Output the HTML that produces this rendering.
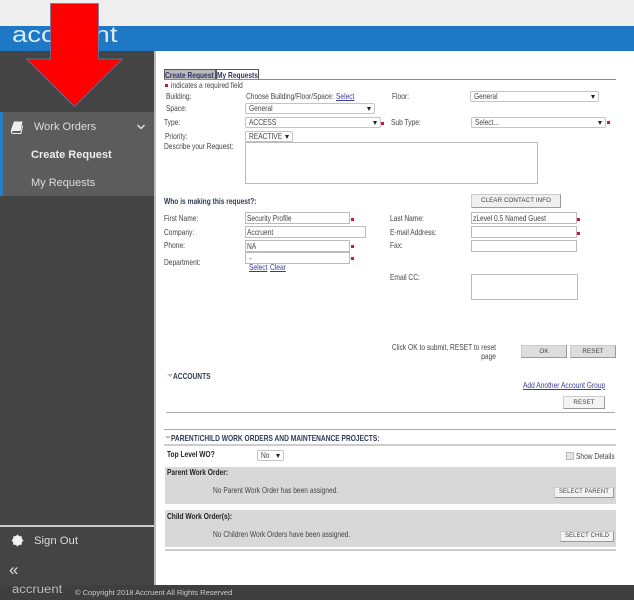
<!DOCTYPE html>
<html><head><meta charset="utf-8"><style>
html,body{margin:0;padding:0}
body{width:634px;height:600px;position:relative;overflow:hidden;background:#fff;font-family:"Liberation Sans",sans-serif;font-size:8.5px;color:#333}
.a,.l,.i,.s,.b,.t,.r,.k{position:absolute}
.l{white-space:nowrap;line-height:10px;color:#444;transform:scaleX(.78);transform-origin:left center}
.k{white-space:nowrap;line-height:10px;color:#3a3a9a;text-decoration:underline;transform:scaleX(.78);transform-origin:left center}
.u{display:inline-block;transform:scaleX(.78);transform-origin:left center}
.i,.t{box-sizing:border-box;background:#fff;border:1px solid #bbb;padding-left:1px;line-height:10px;white-space:nowrap;color:#444;height:12px}
.s{box-sizing:border-box;background:#fff;border:1px solid #c4c4c4;border-radius:2px;padding-left:3px;line-height:9px;white-space:nowrap;color:#444;height:11px}
.s:after{content:"";position:absolute;right:3px;top:3px;border:2px solid transparent;border-top:4px solid #222;border-bottom:0}
.b{box-sizing:border-box;background:#efefef;border:1px solid #ccc;border-right-color:#999;border-bottom-color:#999;text-align:center;font-size:6.2px;letter-spacing:.1px;color:#444;line-height:11px;white-space:nowrap}
.r{width:3px;height:3px;background:#d2143a}
.h{height:1px;background:#aaa;position:absolute}
.m{position:absolute;color:#eee;white-space:nowrap}
.q{font-weight:bold;color:#222}
.tab{position:absolute;top:69px;height:10px;border:1px solid #555;border-bottom:0;line-height:11px;color:#336;text-decoration:underline;font-weight:bold;white-space:nowrap;overflow:hidden}
</style></head><body>
<div class="a" style="left:0;top:0;width:634px;height:26px;background:#efefef"></div>
<div class="a" style="left:0;top:26px;width:634px;height:25px;background:#1f78c6"></div>
<div class="m" style="left:12px;top:23px;font-size:22px;line-height:24px;color:#d8ecf6;transform:scaleX(1.25);transform-origin:left top">accruent</div>

<div class="a" style="left:0;top:51px;width:155px;height:534px;background:#444"></div>
<div class="a" style="left:154px;top:51px;width:2px;height:534px;background:#bbb"></div>
<div class="a" style="left:0;top:112px;width:154px;height:84px;background:#5c5c5c"></div>
<div class="a" style="left:0;top:112px;width:3px;height:84px;background:#2a7cc4"></div>
<svg class="a" style="left:10px;top:120px" width="15" height="15" viewBox="0 0 15 15"><path d="M4 1.500h8.500L10.500 11H3.200C1.800 11 1.600 13 3 13h7.500l1.600-7.500 1 .4L11.300 14H3C.6 14 .6 11.500 1.300 9z" fill="#eee"/></svg>
<div class="m" style="left:34px;top:120px;font-size:11px;line-height:14px;color:#ddd">Work Orders</div>
<svg class="a" style="left:136px;top:123px" width="10" height="8" viewBox="0 0 10 8"><path d="M1.500 2l3.500 3.500L8.500 2" fill="none" stroke="#ddd" stroke-width="1.500"/></svg>
<div class="m" style="left:31px;top:148px;font-size:11px;line-height:14px;font-weight:bold;color:#eee">Create Request</div>
<div class="m" style="left:31px;top:176px;font-size:11px;line-height:14px;color:#ddd">My Requests</div>

<div class="a" style="left:0;top:525px;width:154px;height:2px;background:#ccc"></div>
<svg class="a" style="left:11px;top:534px" width="13" height="13" viewBox="0 0 13 13"><circle cx="6.500" cy="6.500" r="3.500" fill="none" stroke="#f2f2f2" stroke-width="2.800"/><path d="M6.500 .8v11.400M.8 6.500h11.400M2.500 2.500l8 8M10.500 2.500l-8 8" stroke="#f2f2f2" stroke-width="1.800"/></svg>
<div class="m" style="left:34px;top:534px;font-size:11.300px;line-height:14px;color:#ddd">Sign Out</div>
<div class="m" style="left:9px;top:561px;font-size:17px;line-height:17px;color:#ddd">«</div>

<div class="a" style="left:0;top:585px;width:634px;height:15px;background:#3f3f3f"></div>
<div class="m" style="left:12px;top:583px;font-size:11.500px;line-height:15px;color:#bbb;transform:scaleX(1.14);transform-origin:left top">accruent</div>
<div class="m" style="left:75px;top:587px;font-size:7.500px;line-height:11px;color:#ccc">© Copyright 2018 Accruent All Rights Reserved</div>

<svg class="a" style="left:0;top:0" width="160" height="115"><path d="M50.500 3.500H98.500V59H122.500L74.500 106.500L26.500 59H50.500Z" fill="#fe0000" stroke="#5b82b5" stroke-width=".7"/></svg>

<!-- tabs -->
<div class="tab" style="left:164px;width:50px;background:#bbb"><span class="u">Create Request</span></div>
<div class="tab" style="left:216px;width:41px;background:#fff"><span class="u">My Requests</span></div>
<div class="a" style="left:164px;top:79px;width:452px;height:1px;background:#888"></div>
<div class="r" style="left:165px;top:84px"></div>
<div class="l" style="left:171px;top:80px">indicates a required field</div>

<div class="l" style="left:166px;top:91px">Building:</div>
<div class="l" style="left:246px;top:91px">Choose Building/Floor/Space:</div>
<div class="k" style="left:336px;top:91px">Select</div>
<div class="l" style="left:392px;top:91px">Floor:</div>
<div class="s" style="left:470px;top:91px;width:129px"><span class="u">General</span></div>

<div class="l" style="left:166px;top:103px">Space:</div>
<div class="s" style="left:245px;top:103px;width:130px"><span class="u">General</span></div>

<div class="l" style="left:164px;top:117px">Type:</div>
<div class="s" style="left:245px;top:117px;width:136px"><span class="u">ACCESS</span></div>
<div class="r" style="left:381px;top:122px"></div>
<div class="l" style="left:391px;top:117px">Sub Type:</div>
<div class="s" style="left:471px;top:117px;width:135px"><span class="u">Select...</span></div>
<div class="r" style="left:607px;top:121px"></div>

<div class="l" style="left:165px;top:131px">Priority:</div>
<div class="s" style="left:245px;top:131px;width:48px"><span class="u">REACTIVE</span></div>
<div class="l" style="left:164px;top:141px">Describe your Request:</div>
<div class="a" style="box-sizing:border-box;left:245px;top:142px;width:293px;height:42px;border:1px solid #bbb"></div>

<div class="l" style="left:164px;top:196px;font-weight:bold;color:#2c3c58">Who is making this request?:</div>
<div class="b" style="left:471px;top:194px;width:90px;height:14px;line-height:12px">CLEAR CONTACT INFO</div>

<div class="l" style="left:164px;top:213px">First Name:</div>
<div class="i" style="left:245px;top:212px;width:105px"><span class="u">Security Profile</span></div>
<div class="r" style="left:351px;top:218px"></div>
<div class="l" style="left:390px;top:213px">Last Name:</div>
<div class="i" style="left:471px;top:212px;width:106px"><span class="u">zLevel 0.5 Named Guest</span></div>
<div class="r" style="left:577px;top:218px"></div>

<div class="l" style="left:164px;top:227px">Company:</div>
<div class="i" style="left:245px;top:226px;width:121px"><span class="u">Accruent</span></div>
<div class="l" style="left:390px;top:227px">E-mail Address:</div>
<div class="i" style="left:471px;top:226px;width:106px"></div>
<div class="r" style="left:577px;top:232px"></div>

<div class="l" style="left:164px;top:240px">Phone:</div>
<div class="i" style="left:245px;top:240px;width:105px"><span class="u">NA</span></div>
<div class="r" style="left:351px;top:245px"></div>
<div class="l" style="left:390px;top:240px">Fax:</div>
<div class="i" style="left:471px;top:240px;width:106px"></div>

<div class="l" style="left:164px;top:257px">Department:</div>
<div class="i" style="left:245px;top:252px;width:105px;padding-left:3px">-</div>
<div class="r" style="left:351px;top:257px"></div>
<div class="k" style="left:249px;top:262px">Select</div>
<div class="k" style="left:270px;top:262px">Clear</div>

<div class="l" style="left:390px;top:272px">Email CC:</div>
<div class="a" style="box-sizing:border-box;left:471px;top:274px;width:107px;height:26px;border:1px solid #bbb"></div>

<div class="l" style="left:356px;top:343px;width:140px;text-align:right;white-space:normal;line-height:9px;transform-origin:right center">Click OK to submit, RESET to reset page</div>
<div class="b" style="left:521px;top:345px;width:46px;height:13px;background:#ddd">OK</div>
<div class="b" style="left:570px;top:345px;width:46px;height:13px;background:#ddd">RESET</div>

<div class="a" style="left:167px;top:374px;border:3px solid transparent;border-top:3px solid #bbb;border-bottom:0"></div>
<div class="l" style="left:173px;top:371px;font-weight:bold;color:#2c3c58">ACCOUNTS</div>
<div class="k" style="left:523px;top:380px">Add Another Account Group</div>
<div class="b" style="left:563px;top:396px;width:42px;height:13px;background:#f4f4f4">RESET</div>
<div class="h" style="left:166px;top:412px;width:449px"></div>

<div class="h" style="left:164px;top:429px;width:452px"></div>
<div class="a" style="left:165px;top:436px;border:3px solid transparent;border-top:3px solid #bbb;border-bottom:0"></div>
<div class="l" style="left:171px;top:433px;font-weight:bold;color:#2c3c58">PARENT/CHILD WORK ORDERS AND MAINTENANCE PROJECTS:</div>
<div class="a" style="left:164px;top:444px;width:452px;height:2px;background:#ccc"></div>

<div class="l q" style="left:167px;top:449px">Top Level WO?</div>
<div class="s" style="left:257px;top:450px;width:27px;height:11px"><span class="u">No</span></div>
<div class="a" style="box-sizing:border-box;left:566px;top:452px;width:8px;height:8px;background:#e4e4e4;border:1px solid #bbb"></div>
<div class="l" style="left:576px;top:451px">Show Details</div>

<div class="a" style="left:165px;top:467px;width:451px;height:37px;background:#d8d8d8"></div>
<div class="l q" style="left:167px;top:467px">Parent Work Order:</div>
<div class="l" style="left:213px;top:485px">No Parent Work Order has been assigned.</div>
<div class="b" style="left:554px;top:487px;width:60px;height:11px;line-height:9px;background:#f2f2f2;font-size:6px">SELECT PARENT</div>

<div class="a" style="left:165px;top:510px;width:451px;height:37px;background:#d8d8d8"></div>
<div class="l q" style="left:167px;top:511px">Child Work Order(s):</div>
<div class="l" style="left:213px;top:529px">No Children Work Orders have been assigned.</div>
<div class="b" style="left:560px;top:531px;width:54px;height:11px;line-height:9px;background:#f2f2f2;font-size:6px">SELECT CHILD</div>
<div class="a" style="left:165px;top:549px;width:451px;height:2px;background:#ccc"></div>
</body></html>
